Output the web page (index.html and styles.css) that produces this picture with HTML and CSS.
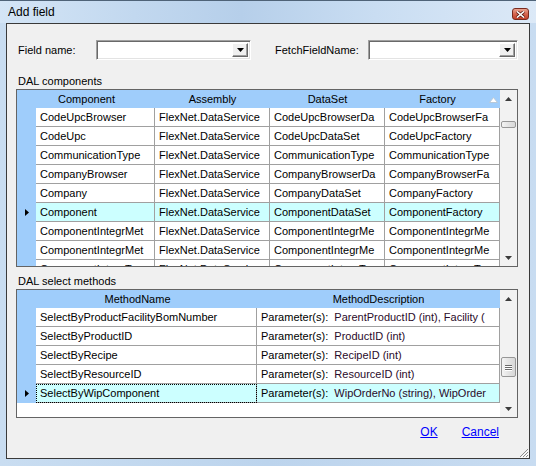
FILE: index.html
```html
<!DOCTYPE html>
<html lang="en">
<head>
    <meta charset="UTF-8">
    <meta name="viewport" content="width=device-width, initial-scale=1.0">
    <title>Add field</title>
    <link rel="stylesheet" href="styles.css">
</head>
<body>
<div class="window">
    <div class="titlebar">
        <span class="title">Add field</span>
        <span class="close">
            <svg width="9" height="7" viewBox="0 0 9 7"><path d="M1 0.5 L8 6.5 M8 0.5 L1 6.5" stroke="#5a1a12" stroke-width="3"/><path d="M1 0.5 L8 6.5 M8 0.5 L1 6.5" stroke="#fff" stroke-width="1.6"/></svg>
        </span>
    </div>
    <div class="client">
        <div class="fields">
            <label class="field-label name-label">Field name:</label>
            <div class="combo combo-name"><span class="drop"><svg width="7" height="4" viewBox="0 0 7 4"><path d="M0 0 L7 0 L3.5 4Z"/></svg></span></div>
            <label class="field-label fetch-label">FetchFieldName:</label>
            <div class="combo combo-fetch"><span class="drop"><svg width="7" height="4" viewBox="0 0 7 4"><path d="M0 0 L7 0 L3.5 4Z"/></svg></span></div>
        </div>

        <div class="caption">DAL components</div>
        <div class="grid grid-components">
            <div class="grid-body">
                <div class="row head">
                    <div class="hcell"></div>
                    <div class="hcell first">Component</div>
                    <div class="hcell">Assembly</div>
                    <div class="hcell">DataSet</div>
                    <div class="hcell sorted">Factory
                        <svg class="sort-glyph" width="9" height="6" viewBox="0 0 9 6"><path d="M0.5 5.5 L4.5 0.5 L8.5 5.5Z" fill="#fff" stroke="#b7c8d8"/></svg>
                    </div>
                </div>
                <div class="row">
                    <div class="rh"></div>
                    <div class="cell">CodeUpcBrowser</div>
                    <div class="cell">FlexNet.DataService</div>
                    <div class="cell">CodeUpcBrowserDa</div>
                    <div class="cell">CodeUpcBrowserFa</div>
                </div>
                <div class="row">
                    <div class="rh"></div>
                    <div class="cell">CodeUpc</div>
                    <div class="cell">FlexNet.DataService</div>
                    <div class="cell">CodeUpcDataSet</div>
                    <div class="cell">CodeUpcFactory</div>
                </div>
                <div class="row">
                    <div class="rh"></div>
                    <div class="cell">CommunicationType</div>
                    <div class="cell">FlexNet.DataService</div>
                    <div class="cell">CommunicationType</div>
                    <div class="cell">CommunicationType</div>
                </div>
                <div class="row">
                    <div class="rh"></div>
                    <div class="cell">CompanyBrowser</div>
                    <div class="cell">FlexNet.DataService</div>
                    <div class="cell">CompanyBrowserDa</div>
                    <div class="cell">CompanyBrowserFa</div>
                </div>
                <div class="row">
                    <div class="rh"></div>
                    <div class="cell">Company</div>
                    <div class="cell">FlexNet.DataService</div>
                    <div class="cell">CompanyDataSet</div>
                    <div class="cell">CompanyFactory</div>
                </div>
                <div class="row selected">
                    <div class="rh"><svg width="4" height="7" viewBox="0 0 4 7"><path d="M0 0 L4 3.5 L0 7Z"/></svg></div>
                    <div class="cell">Component</div>
                    <div class="cell">FlexNet.DataService</div>
                    <div class="cell">ComponentDataSet</div>
                    <div class="cell">ComponentFactory</div>
                </div>
                <div class="row">
                    <div class="rh"></div>
                    <div class="cell">ComponentIntegrMet</div>
                    <div class="cell">FlexNet.DataService</div>
                    <div class="cell">ComponentIntegrMe</div>
                    <div class="cell">ComponentIntegrMe</div>
                </div>
                <div class="row">
                    <div class="rh"></div>
                    <div class="cell">ComponentIntegrMet</div>
                    <div class="cell">FlexNet.DataService</div>
                    <div class="cell">ComponentIntegrMe</div>
                    <div class="cell">ComponentIntegrMe</div>
                </div>
                <div class="row">
                    <div class="rh"></div>
                    <div class="cell">ComponentIntegrTy</div>
                    <div class="cell">FlexNet.DataService</div>
                    <div class="cell">ComponentIntegrTy</div>
                    <div class="cell">ComponentIntegrTy</div>
                </div>
            </div>
            <div class="vscroll">
                <div class="arrow"><svg width="7" height="4" viewBox="0 0 7 4"><path d="M0 4 L3.5 0 L7 4Z"/></svg></div>
                <div class="track">
                    <div class="thumb thumb-small"></div>
                </div>
                <div class="arrow"><svg width="7" height="4" viewBox="0 0 7 4"><path d="M0 0 L7 0 L3.5 4Z"/></svg></div>
            </div>
        </div>

        <div class="caption">DAL select methods</div>
        <div class="grid grid-methods">
            <div class="grid-body">
                <div class="row head">
                    <div class="hcell"></div>
                    <div class="hcell first">MethodName</div>
                    <div class="hcell">MethodDescription</div>
                </div>
                <div class="row">
                    <div class="rh"></div>
                    <div class="cell">SelectByProductFacilityBomNumber</div>
                    <div class="cell desc">Parameter(s):  <span class="value">ParentProductID (int), Facility (</span></div>
                </div>
                <div class="row">
                    <div class="rh"></div>
                    <div class="cell">SelectByProductID</div>
                    <div class="cell desc">Parameter(s):  <span class="value">ProductID (int)</span></div>
                </div>
                <div class="row">
                    <div class="rh"></div>
                    <div class="cell">SelectByRecipe</div>
                    <div class="cell desc">Parameter(s):  <span class="value">RecipeID (int)</span></div>
                </div>
                <div class="row">
                    <div class="rh"></div>
                    <div class="cell">SelectByResourceID</div>
                    <div class="cell desc">Parameter(s):  <span class="value">ResourceID (int)</span></div>
                </div>
                <div class="row selected">
                    <div class="rh"><svg width="4" height="7" viewBox="0 0 4 7"><path d="M0 0 L4 3.5 L0 7Z"/></svg></div>
                    <div class="cell focus">SelectByWipComponent</div>
                    <div class="cell desc">Parameter(s):  <span class="value">WipOrderNo (string), WipOrder</span></div>
                </div>
            </div>
            <div class="vscroll">
                <div class="arrow"><svg width="7" height="4" viewBox="0 0 7 4"><path d="M0 4 L3.5 0 L7 4Z"/></svg></div>
                <div class="track">
                    <div class="thumb thumb-methods"><span></span><span></span><span></span></div>
                </div>
                <div class="arrow"><svg width="7" height="4" viewBox="0 0 7 4"><path d="M0 0 L7 0 L3.5 4Z"/></svg></div>
            </div>
        </div>

        <div class="actions">
            <a class="link" href="#">OK</a>
            <a class="link" href="#">Cancel</a>
        </div>

        <svg class="grip" width="12" height="12" viewBox="0 0 12 12">
            <path d="M11 3 L3 11 M11 6 L6 11 M11 9 L9 11" stroke="#8c8c8c" stroke-width="1"/>
            <path d="M12 4 L4 12 M12 7 L7 12 M12 10 L10 12" stroke="#fff" stroke-width="1"/>
        </svg>
    </div>
</div>
</body>
</html>
```

FILE: styles.css
```css
*{
    margin: 0;
    padding: 0;
    box-sizing: border-box;
}
html, body {
    width: 100%;
    height: 100%;
}
body {
    background-color: #c6dbf0;
    font-family: "Liberation Sans", Arial, sans-serif;
    font-size: 11px;
    color: #000;
    overflow: hidden;
}

.window {
    width: 536px;
    height: 466px;
    display: flex;
    flex-direction: column;
    border-top: 1px solid #4f6378;
    background: linear-gradient(90deg, #c9ddf1, #bcd4ed 50%, #c8dcf1);
}

.titlebar {
    height: 22px;
    display: flex;
    justify-content: space-between;
    align-items: flex-start;
    padding: 0 7px 0 8px;
    background: linear-gradient(90deg, #d4e5f6 0%, #c2d8ef 25%, #b6cfea 45%, #c9ddf2 70%, #dce9f7 100%);
}
.title {
    font-size: 12px;
    line-height: 15px;
    margin-top: 4px;
}
.close {
    width: 17px;
    height: 12px;
    margin-top: 7px;
    display: flex;
    align-items: center;
    justify-content: center;
    border: 1px solid #7a2a1e;
    border-radius: 3px;
    background: linear-gradient(#e9a391, #d6654f 50%, #c2412b);
}

.client {
    position: relative;
    margin: 0 6px;
    height: 436px;
    background-color: #f0f0f0;
    border: 1px solid #3a3a3a;
}

/* top field row */
.fields {
    display: flex;
    align-items: center;
    height: 20px;
    margin-top: 16px;
    padding-left: 11px;
}
.field-label {
    line-height: 15px;
}
.name-label {
    width: 78px;
}
.fetch-label {
    width: 93px;
    margin-left: 24px;
}
.combo {
    height: 20px;
    display: flex;
    justify-content: flex-end;
    background-color: #fff;
    border: 1px solid;
    border-color: #a0a0a0 #fff #fff #a0a0a0;
    box-shadow: inset 1px 1px 0 #696969, inset -1px -1px 0 #e3e3e3;
    padding: 2px;
}
.combo-name {
    width: 155px;
}
.combo-fetch {
    width: 150px;
}
.drop {
    width: 16px;
    height: 14px;
    display: flex;
    align-items: center;
    justify-content: center;
    background-color: #f0f0f0;
    border: 1px solid;
    border-color: #fff #696969 #696969 #fff;
    box-shadow: inset -1px -1px 0 #a0a0a0;
}

.caption {
    line-height: 15px;
    padding-left: 11px;
    margin-top: 14px;
}
.grid-methods + .actions,
.grid + .caption {
    margin-top: 7px;
}

/* data grids */
.grid {
    display: flex;
    width: 502px;
    margin-left: 9px;
    background-color: #fff;
    border: 1px solid #646464;
}
.grid-components {
    height: 178px;
}
.grid-methods {
    height: 129px;
}
.grid-body {
    flex-grow: 1;
    overflow: hidden;
}
.row {
    display: grid;
    height: 19px;
}
.grid-components .row {
    grid-template-columns: 19px 119px 115px 115px 115px;
}
.grid-methods .row {
    grid-template-columns: 19px 221px 243px;
}
.row.head {
    height: 18px;
    background-color: #9fcdfb;
}
.hcell {
    position: relative;
    line-height: 18px;
    text-align: center;
    white-space: nowrap;
}
.hcell.first {
    padding-right: 18px;
}
.hcell.sorted {
    padding-right: 10px;
}
.sort-glyph {
    position: absolute;
    right: 2px;
    top: 7px;
}
.rh {
    background-color: #9fcdfb;
    display: flex;
    align-items: center;
    justify-content: center;
}
.cell {
    line-height: 18px;
    padding-left: 4px;
    white-space: pre;
    overflow: hidden;
    border-right: 1px solid #a0a0a0;
    border-bottom: 1px solid #a0a0a0;
}
.selected .cell {
    background-color: #ccffff;
}
.cell.focus {
    outline: 1px dotted #000;
    outline-offset: -1px;
}
.value {
    color: #2a0a2a;
}

/* scrollbars */
.vscroll {
    width: 17px;
    display: flex;
    flex-direction: column;
    background-color: #f2f2f2;
}
.arrow {
    height: 17px;
    display: flex;
    align-items: center;
    justify-content: center;
}
.arrow svg {
    fill: #3c3c3c;
}
.track {
    flex-grow: 1;
}
.thumb {
    width: 15px;
    margin-left: 1px;
    border: 1px solid #979797;
    border-radius: 2px;
    background: linear-gradient(90deg, #f4f4f4, #e4e4e4 50%, #d8d8d8);
}
.thumb-small {
    height: 7px;
    margin-top: 14px;
}
.thumb-methods {
    height: 20px;
    margin-top: 50px;
    display: flex;
    flex-direction: column;
    align-items: center;
    justify-content: center;
    gap: 1px;
}
.thumb-methods span {
    width: 7px;
    height: 1px;
    background-color: #6a6a6a;
    box-shadow: 0 1px 0 #fff;
}

.actions {
    display: flex;
    justify-content: flex-end;
    gap: 24px;
    padding-right: 30px;
    line-height: 15px;
}
.link {
    color: #0000ff;
    text-decoration: underline;
    font-size: 12px;
}

.grip {
    position: absolute;
    right: 0;
    bottom: 0;
}
```
